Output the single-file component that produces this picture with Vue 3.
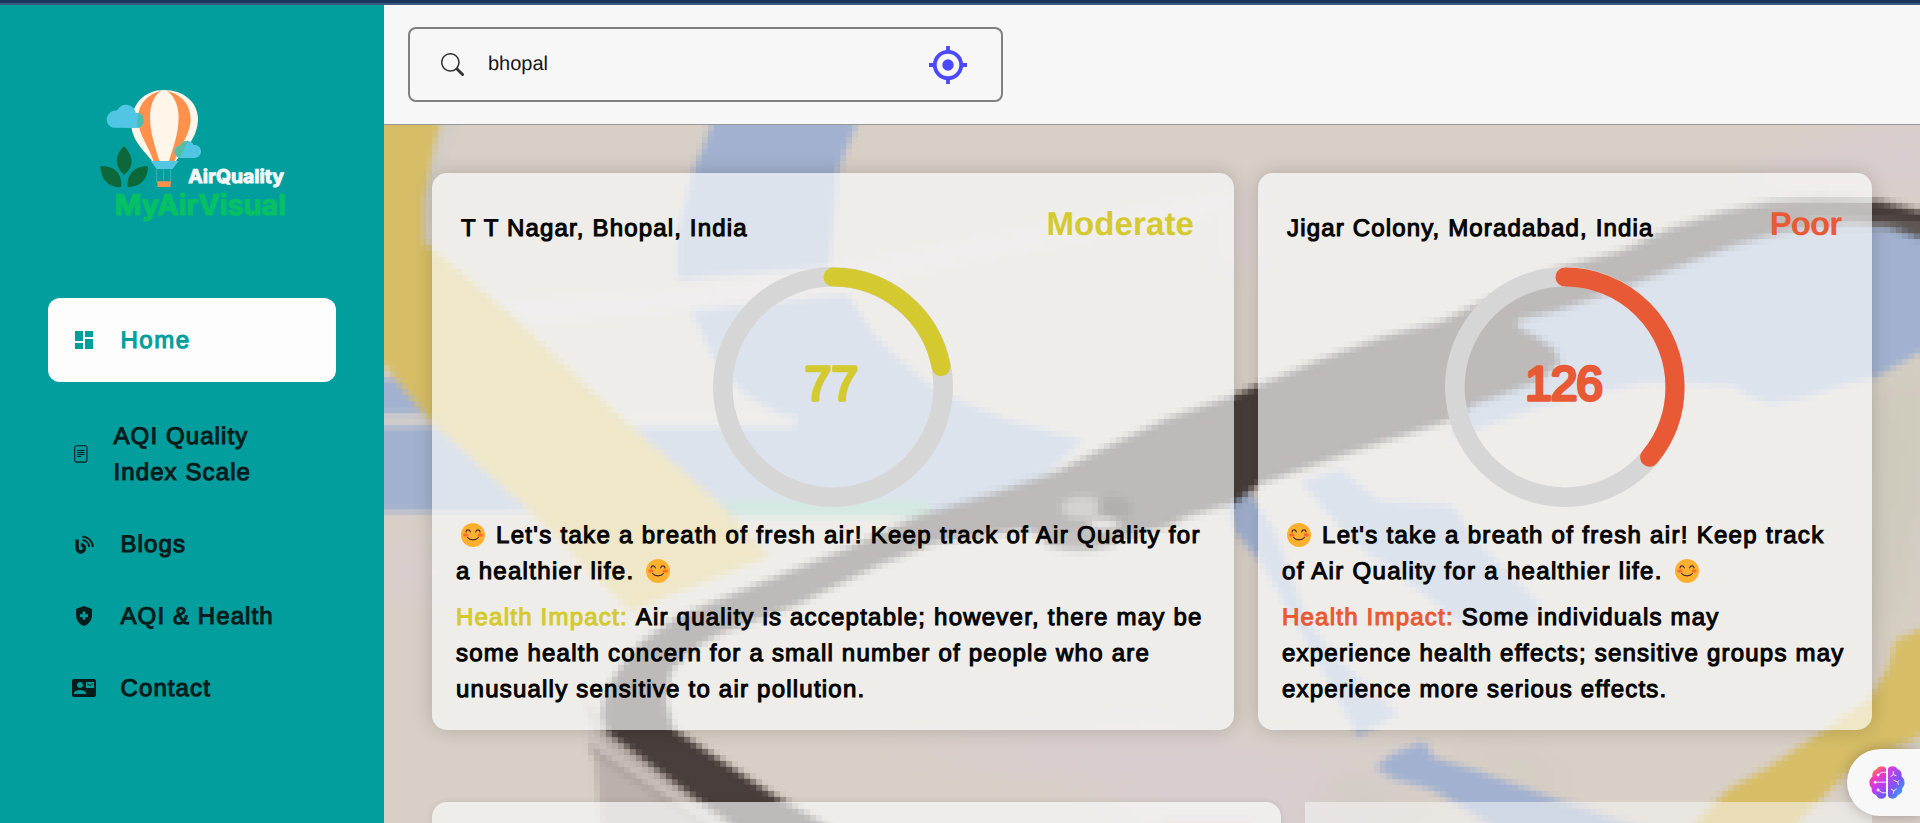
<script setup>
const nav = [
  { id: 'home', lines: ['Home'], active: true },
  { id: 'scale', lines: ['AQI Quality', 'Index Scale'] },
  { id: 'blogs', lines: ['Blogs'] },
  { id: 'health', lines: ['AQI & Health'] },
  { id: 'contact', lines: ['Contact'] }
]

const cards = [
  {
    place: 'T T Nagar, Bhopal, India',
    level: 'Moderate',
    tone: 'moderate',
    color: '#d4ca2f',
    aqi: 77,
    intro: [
      { face: 'start', text: "Let's take a breath of fresh air! Keep track of Air Quality for" },
      { face: 'end', text: 'a healthier life.' }
    ],
    impact: [
      'Air quality is acceptable; however, there may be',
      'some health concern for a small number of people who are',
      'unusually sensitive to air pollution.'
    ]
  },
  {
    place: 'Jigar Colony, Moradabad, India',
    level: 'Poor',
    tone: 'poor',
    color: '#e85a35',
    aqi: 126,
    intro: [
      { face: 'start', text: "Let's take a breath of fresh air! Keep track" },
      { face: 'end', text: 'of Air Quality for a healthier life.' }
    ],
    impact: [
      'Some individuals may',
      'experience health effects; sensitive groups may',
      'experience more serious effects.'
    ]
  }
]

const R = 110
const C = 2 * Math.PI * R
const dash = (aqi) => `${(aqi / 350) * C} ${C}`
</script>

<template>
  <div class="page">
    <div class="strip"></div>
    <div class="body">
      <aside class="sidebar">
        <svg class="logo" viewBox="0 0 630 450">
          <path d="M222 30C165 30 124 70 124 132C124 180 162 212 186 243H258C282 212 324 175 324 115C322 65 280 30 222 30Z" fill="#fff5e8" />
          <path d="M214 32C165 45 144 78 144 120C146 165 180 205 190 243H208C196 200 180 160 180 110C181 70 194 45 214 32Z" fill="#ff914d" />
          <path d="M230 32C280 45 302 78 302 120C300 165 266 205 254 243H237C250 200 266 160 266 110C265 70 250 45 230 32Z" fill="#ff914d" />
          <path d="M182 243H266L248 267H200Z" fill="#55c6e2" />
          <path d="M200 266V306M221 266V306M242 266V306" stroke="#55b9cb" stroke-width="2" />
          <path d="M201 304H243L241 321H203Z" fill="#ff914d" />
          <path d="M74 143C58 143 50 131 50 118C51 101 67 91 82 91C90 75 103 73 113 75C127 78 136 87 137 98C151 97 161 107 161 121C161 136 151 144 138 144Z" fill="#50c6e4" />
          <path d="M139 98C153 98 161 108 161 121C161 136 151 144 143 144C141 134 140 120 146 99Z" fill="#4cbcae" />
          <path d="M268 234C256 230 252 220 253 211C255 200 264 197 271 198C276 186 286 181 296 183C305 186 309 190 311 195C323 193 332 201 333 213C333 225 325 233 314 234Z" fill="#50c6e4" />
          <path d="M268 234C250 225 250 206 268 198C274 187 286 181 296 184C284 198 278 220 268 234Z" fill="#55bfa2" />
          <path d="M102 198C134 232 130 262 102 285C74 260 72 228 102 198Z" fill="#0d6839" />
          <path d="M31 259C70 257 96 276 94 321C58 325 32 300 31 259Z" fill="#0d6839" />
          <path d="M174 259C136 258 111 278 112 321C148 323 174 299 174 259Z" fill="#0d6839" />
          <text x="295" y="310" class="logo-top" textLength="287" lengthAdjust="spacingAndGlyphs">AirQuality</text>
          <text x="74" y="405" class="logo-bottom" textLength="514" lengthAdjust="spacingAndGlyphs">MyAirVisual</text>
        </svg>

        <nav class="menu">
          <a v-for="item in nav" :key="item.id" class="item" :class="[item.id, { active: item.active }]">
            <span class="glyph">
              <svg v-if="item.id === 'home'" width="24" height="24" viewBox="0 0 24 24"><path fill="currentColor" d="M3 13h8V3H3v10zm0 8h8v-6H3v6zm10 0h8V11h-8v10zm0-18v6h8V3h-8z" /></svg>
              <svg v-else-if="item.id === 'scale'" width="14" height="18" viewBox="0 0 14 18" fill="none" stroke="currentColor"><rect x=".7" y=".7" width="12.2" height="16.4" rx="1.6" stroke-width="1.1" /><path d="M3 5.500h7.400M3 7.500h7.400M3 9.500h7.400M3 11.500h4.200" stroke-width="1.100" /></svg>
              <svg v-else-if="item.id === 'blogs'" width="19" height="19" viewBox="0 0 19 19" fill="none" stroke="currentColor"><path d="M2.100 4.500V13.300A3.700 3.700 0 1 0 5.800 9.600" stroke-width="3.400" /><path d="M7.400 5.100A7.800 7.800 0 0 1 14.200 11.900M7.400 1.400A11.200 11.200 0 0 1 17.900 11.900" stroke-width="2" /></svg>
              <svg v-else-if="item.id === 'health'" width="24" height="24" viewBox="0 0 24 24"><path fill="currentColor" fill-rule="evenodd" d="M12 2L4 5v6.100c0 5 3.400 9.700 8 10.900c4.600-1.200 8-5.900 8-10.900V5zM16 13h-2.600v2.600h-2.800V13H8v-2.800h2.600V7.600h2.800v2.600H16z" /></svg>
              <svg v-else width="24" height="18" viewBox="0 3 24 18"><path fill="currentColor" fill-rule="evenodd" d="M22 3H2C.9 3 0 3.900 0 5v14c0 1.100.9 2 2 2h20c1.100 0 2-.9 2-2V5c0-1.100-.9-2-2-2zM8 6c1.660 0 3 1.340 3 3s-1.340 3-3 3-3-1.340-3-3 1.340-3 3-3zm6 12H2v-1c0-2 4-3.100 6-3.100s6 1.100 6 3.100zM22 12h-8V6h8z" /><path d="M15 7.500l3 2 3-2" fill="none" stroke="currentColor" /></svg>
            </span>
            <span class="label"><span v-for="l in item.lines" :key="l">{{ l }}</span></span>
          </a>
        </nav>
      </aside>

      <main class="main">
        <svg class="map" width="1536" height="698" viewBox="384 125 1536 698">
          <defs>
            <filter id="mosaic" x="384" y="125" width="1536" height="698" filterUnits="userSpaceOnUse" primitiveUnits="userSpaceOnUse" color-interpolation-filters="sRGB">
              <feGaussianBlur stdDeviation="3.6" result="soft" />
              <feFlood x="386" y="127" width="2" height="2" flood-color="#000" />
              <feComposite x="384" y="125" width="6" height="6" operator="over" />
              <feTile result="grid" />
              <feComposite in="soft" in2="grid" operator="in" />
              <feMorphology operator="dilate" radius="2" result="blocks" />
              <feMerge><feMergeNode in="soft" /><feMergeNode in="blocks" /></feMerge>
            </filter>
            <filter id="haze" x="-50%" y="-50%" width="200%" height="200%"><feGaussianBlur stdDeviation="18" /></filter>
          </defs>
          <g filter="url(#mosaic)">
            <rect x="340" y="90" width="1630" height="780" fill="#d8cfc6" />
            <g filter="url(#haze)">
              <path d="M1220 190h40v80h-40zM1750 160l200-50v80h-200zM384 540h50v60h-50zM850 745l300-20 280 40 -60 80h-180l-100-60zM1880 470h50v90h-50z" fill="#d9cecf" />
              <path d="M1868 390l60-40v150l-40 150h-20zM1350 780l100 30h-140zM1450 735l120 50h-40z" fill="#cdcabb" />
            </g>
            <path d="M430 120h30l-20 50 -10 70h-10z" fill="#d1cdc7" />
            <path d="M500 314L700 298L870 270L1234 200" fill="none" stroke="#d9d1d0" stroke-width="22" />
            <path d="M717 110L862 110L838 173L830 267L677 280L678 230L692 173Z" fill="#a1b1cf" />
            <path d="M690 311L745 305L848 294L872 330L892 352L932 386L960 400L1015 422L1085 440L1040 480L940 512L370 512V378H431V425L797 425L745 395L715 362Z" fill="#a1b1cf" />
            <path d="M370 420H436M600 421H795" fill="none" stroke="#d5d0cb" stroke-width="12" />
            <path d="M700 500H930V517H700Z" fill="#8cbfad" />
            <path d="M340 90H449L434 150L424 200V241L513 316L613 410L713 497L771 556L630 612L523 505L431 422L384 365L340 330Z" fill="#d6bd66" />

            <path d="M1450 440L1480 350L1600 270L1714 238L1758 230L1872 220L1960 228V330L1920 353L1877 377L1846 385L1798 400L1769 404L1749 397L1734 386L1648 383L1604 392L1538 408Z" fill="#a1b1cf" />
            <path d="M1225 495H1252L1275 530L1308 620L1340 660L1400 714L1358 736L1346 715L1310 650L1259 560L1234 532Z" fill="#a1b1cf" />
            <path d="M1300 482L1340 468L1380 500L1453 505L1476 540L1540 603L1535 620L1466 628L1430 600L1350 540Z" fill="#a1b1cf" />
            <path d="M1375 767L1393 753L1424 741L1434 757L1476 770L1560 800L1650 830H1500L1432 790L1393 779Z" fill="#a1b1cf" />
            <path d="M1960 610L1895 640L1888 667L1870 697L1824 730L1771 765L1727 790L1660 860H1760L1846 775L1868 763L1960 716Z" fill="#d6bd66" />

            <path d="M582 690L603 730L703 804L790 870H605L594 760Z" fill="#bbb0ab" />
            <path d="M586 720L604 752L730 835" fill="none" stroke="#d6cbc6" stroke-width="7" />
            <path d="M590 748L720 835" fill="none" stroke="#a59a95" stroke-width="6" />
            <path d="M1960 222L1880 203L1820 201L1771 203L1723 213L1670 230L1622 252L1556 270L1476 306L1441 323L1384 338L1318 362L1259 387L1234 397L1170 419L1103 450L1053 475L987 497L920 517L840 553L747 590L680 617L640 644L620 670L608 690L603 715L609 732L703 802L790 862L905 870L777 799L672 730L664 700L670 670L692 648L716 634L797 603L880 563L937 541L1027 528L1050 538L1113 538L1132 534L1170 524L1187 515L1233 502L1259 483L1318 462L1384 440L1450 419L1476 402L1538 380L1558 363L1553 350L1534 337L1516 328L1516 319L1560 308L1626 285L1688 261L1736 243L1780 231L1824 225L1872 222L1960 246Z" fill="#483e3b" stroke="#2c221f" stroke-width="3" />
            <path d="M1810 219L1930 228" stroke="#77706c" stroke-width="6" />
            <ellipse cx="1080" cy="540" rx="38" ry="11" fill="#5d5552" />
            <ellipse cx="1082" cy="508" rx="20" ry="11" fill="#8c8480" />
            <ellipse cx="1115" cy="509" rx="17" ry="13" fill="#25201e" />
            <ellipse cx="1104" cy="524" rx="15" ry="5" fill="#d6ceca" />
            <path d="M1160 820h90v20h-90z" fill="#d5b6bd" />
          </g>
        </svg>

        <header class="top">
          <div class="search">
            <svg class="lens" width="23" height="23" viewBox="0 0 16 16"><path fill="#333" d="M11.742 10.344a6.500 6.500 0 1 0-1.397 1.398h-.001c.03.040.062.078.098.115l3.850 3.850a1 1 0 0 0 1.415-1.414l-3.850-3.850a1.007 1.007 0 0 0-.115-.1zM12 6.500a5.500 5.500 0 1 1-11 0 5.500 5.500 0 0 1 11 0z" /></svg>
            <span class="query">bhopal</span>
            <svg class="locate" width="38" height="38" viewBox="0 0 38 38"><circle cx="19" cy="19" r="13.200" fill="none" stroke="#4b48ff" stroke-width="3.800" /><circle cx="19" cy="19" r="5.700" fill="#4b48ff" /><path d="M19 0v5M19 33v5M0 19h5M33 19h5" stroke="#4b48ff" stroke-width="3.800" /></svg>
          </div>
        </header>

        <section class="cards">
          <article v-for="c in cards" :key="c.place" class="card" :class="c.tone">
            <div class="head">
              <span class="place">{{ c.place }}</span>
              <span class="level">{{ c.level }}</span>
            </div>
            <svg class="ring" width="240" height="240" viewBox="0 0 240 240">
              <circle cx="120" cy="120" r="110.200" fill="none" stroke="#d6d6d6" stroke-width="19.600" />
              <circle cx="120" cy="120" :r="R" fill="none" :stroke="c.color" stroke-width="19" stroke-linecap="round" :stroke-dasharray="dash(c.aqi)" transform="rotate(-90 120 120)" />
              <text x="118.500" y="132.800" text-anchor="middle" class="aqi" :fill="c.color" :stroke="c.color">{{ c.aqi }}</text>
            </svg>
            <div class="copy intro">
              <div v-for="l in c.intro" :key="l.text" class="line" :class="l.face">
                <svg class="face" width="24" height="24" viewBox="0 0 24 24"><circle cx="12" cy="12" r="12" fill="#ffb02e" /><ellipse cx="4.800" cy="12" rx="2.700" ry="1.700" fill="#ff6a2f" /><ellipse cx="19.200" cy="12" rx="2.700" ry="1.700" fill="#ff6a2f" /><path d="M5 8.800C5.400 6.300 8.600 6.300 9.300 8.800M14.700 8.800C15.400 6.300 18.600 6.300 19 8.800M6.600 14.500C9 17.700 15 17.700 17.400 14.500" fill="none" stroke="#402a32" stroke-width="1.200" stroke-linecap="round" /></svg>
                <span class="words">{{ l.text }}</span>
              </div>
            </div>
            <div class="copy">
              <div v-for="(l, i) in c.impact" :key="l" class="line">
                <span v-if="i === 0" class="words tag">Health Impact:&nbsp;</span><span class="words">{{ l }}</span>
              </div>
            </div>
          </article>
        </section>

        <section class="next">
          <div class="panel wide"></div>
          <div class="panel flat"></div>
        </section>
      </main>
    </div>

    <div class="assistant">
      <svg width="36" height="33" viewBox="0 0 108 100">
        <defs>
          <linearGradient id="lobeA" x1="0.300" y1="0" x2="0.700" y2="1"><stop offset="0" stop-color="#ff9a2a" /><stop offset=".3" stop-color="#f23bb3" /><stop offset=".6" stop-color="#c83bea" /><stop offset="1" stop-color="#665dff" /></linearGradient>
          <linearGradient id="lobeB" x1="0.200" y1="0" x2="0.900" y2="1"><stop offset="0" stop-color="#d63be0" /><stop offset=".5" stop-color="#7b55f5" /><stop offset="1" stop-color="#20b5ff" /></linearGradient>
        </defs>
        <path d="M51 8C46-2 27-2 23 9C12 12 8 22 10 32C-2 40-2 60 8 67C6 80 14 86 21 87C25 101 45 103 51 91Z" fill="url(#lobeA)" />
        <path d="M57 8C62-2 81-2 85 9C96 12 100 22 98 32C110 40 110 60 100 67C102 80 94 86 87 87C83 101 63 103 57 91Z" fill="url(#lobeB)" />
        <g fill="none" stroke="#f4e8ff" stroke-width="3"><path d="M51 19H39L28 26M51 49H19M51 81H39L28 73" /><path d="M73 16v10l-8 6M73 26l10 4M74 43l12 5 5-4M86 48l3 9M66 70l9 5 9-6M75 75l-2 9" /></g>
        <g fill="#f4e8ff"><circle cx="27" cy="27" r="4.500" /><circle cx="18" cy="49" r="4.500" /><circle cx="27" cy="73" r="4.500" /></g>
      </svg>
    </div>
  </div>
</template>

<style>
body {
  overflow: hidden;
}
</style>

<style scoped>
.page {
  position: relative;
  width: 1920px;
  height: 823px;
  overflow: hidden;
  display: flex;
  flex-direction: column;
  font-family: 'Liberation Sans', Arial, sans-serif;
  color: #050505;
  text-rendering: geometricPrecision;
}
.strip {
  height: 3px;
  flex: none;
  background: #1b355d;
  border-bottom: 2px solid #395a80;
}
.body {
  flex: 1;
  display: flex;
  min-height: 0;
}
.sidebar {
  width: 384px;
  flex: none;
  background: #029e9d;
  display: flex;
  flex-direction: column;
}
.logo {
  width: 210px;
  height: 150px;
  margin: 75px 0 68px 90px;
}
.logo-top {
  font: 700 57px Inter, sans-serif;
  fill: #f4f6f8;
  stroke: #f4f6f8;
  stroke-width: 3px;
}
.logo-bottom {
  font: 700 86px Inter, sans-serif;
  fill: #05c164;
  stroke: #05c164;
  stroke-width: 3px;
}
.menu {
  display: flex;
  flex-direction: column;
  padding: 0 48px;
}
.item {
  height: 72px;
  display: flex;
  align-items: center;
  padding-left: 24px;
  color: #031d1d;
  font-size: 24px;
  line-height: 36px;
  letter-spacing: 1.1px;
  -webkit-text-stroke: 1.1px currentColor;
}
.item svg {
  display: block;
}
.glyph {
  width: 24px;
  display: flex;
  justify-content: center;
}
.label {
  margin-left: 24.5px;
  padding-top: 2px;
  display: flex;
  flex-direction: column;
}
.item.active {
  height: 84px;
  background: #fdfdfd;
  border-radius: 12px;
  color: #029e9d;
  letter-spacing: 1.5px;
}
.item.scale {
  height: 108px;
  margin-top: 18px;
}
.scale .glyph {
  width: 17px;
}
.contact .glyph {
  padding-bottom: 1px;
}
.main {
  position: relative;
  flex: 1;
  display: flex;
  flex-direction: column;
  overflow: hidden;
}
.map {
  position: absolute;
  left: 0;
  top: 120px;
}
.top {
  position: relative;
  height: 119px;
  flex: none;
  background: #f7f7f7;
  border-bottom: 1px solid #989898;
  display: flex;
  align-items: center;
}
.search {
  margin-left: 24px;
  box-sizing: border-box;
  width: 595px;
  height: 75px;
  border: 2px solid #808080;
  border-radius: 8px;
  display: flex;
  align-items: center;
  padding: 0 34px 0 31px;
}
.query {
  margin-left: 24px;
  font-size: 20px;
  color: #161616;
}
.locate {
  margin-left: auto;
}
.cards {
  position: relative;
  display: flex;
  gap: 24px;
  padding: 48px 0 0 48px;
}
.card {
  box-sizing: border-box;
  height: 557px;
  padding: 37px 24px 0;
  border-radius: 15px;
  background: rgba(252, 253, 253, 0.65);
  box-shadow: 0 0 20px rgba(0, 0, 0, 0.18);
  display: flex;
  flex-direction: column;
}
.moderate {
  width: 802px;
}
.poor {
  width: 614px;
}
.head {
  height: 57px;
  display: flex;
  justify-content: space-between;
  padding: 0 16px 0 5px;
  line-height: 36px;
}
.poor .head {
  padding-right: 7px;
}
.place {
  padding-top: 1px;
  font-size: 24px;
  letter-spacing: 1.16px;
  -webkit-text-stroke: 1.1px #050505;
}
.level {
  font-size: 33px;
  font-weight: 700;
  line-height: 27px;
  letter-spacing: 0.1px;
}
.poor .level {
  letter-spacing: -1px;
}
.moderate .level,
.moderate .tag {
  color: #d4ca2f;
}
.poor .level,
.poor .tag {
  color: #e85a35;
}
.ring {
  align-self: center;
  flex: none;
}
.aqi {
  font-size: 48px;
  stroke-width: 3.4px;
  stroke-linejoin: round;
}
.poor .aqi {
  letter-spacing: -1.2px;
}
.copy {
  margin-top: 10px;
}
.line {
  height: 36px;
  line-height: 36px;
  display: flex;
  align-items: center;
  white-space: nowrap;
  font-size: 24px;
  letter-spacing: 1.22px;
  -webkit-text-stroke: 1.1px currentColor;
}
.words {
  padding-top: 1px;
}
.intro .line {
  letter-spacing: 1.31px;
}
.start .face {
  margin: 0 11px 0 5px;
}
.end .face {
  order: 2;
  margin-left: 12px;
}
.next {
  position: relative;
  display: flex;
  gap: 24px;
  padding: 72px 0 0 48px;
}
.panel {
  height: 200px;
  flex: none;
  background: rgba(252, 253, 253, 0.65);
}
.wide {
  width: 849px;
  border-radius: 15px;
  box-shadow: 0 0 6px rgba(0, 0, 0, 0.1);
}
.flat {
  width: 567px;
  background: rgba(248, 248, 248, 0.55);
}
.assistant {
  position: absolute;
  right: 0;
  top: 749px;
  width: 73px;
  height: 67px;
  border-radius: 34px 0 0 34px;
  background: #f8f8f8;
  box-shadow: 0 0 14px rgba(0, 0, 0, 0.25);
  display: flex;
  align-items: center;
}
.assistant svg {
  margin-left: 22px;
}
</style>
